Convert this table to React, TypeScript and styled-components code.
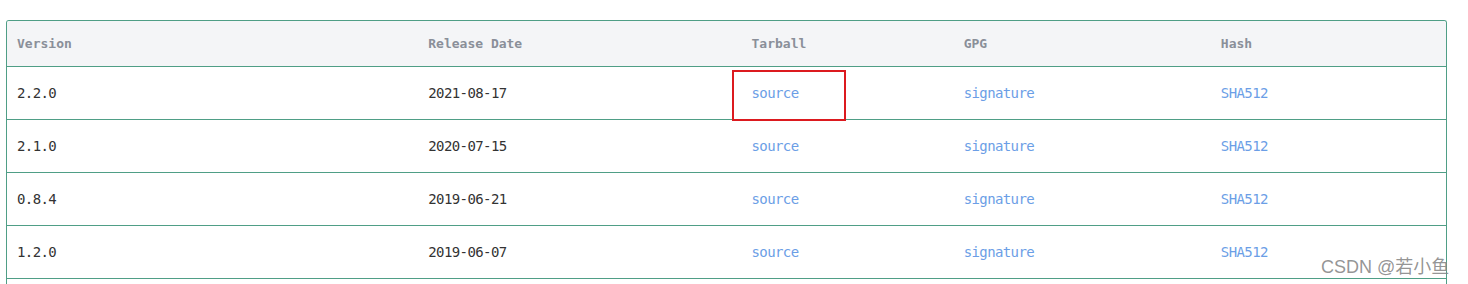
import React from "react";
import styled, { createGlobalStyle } from "styled-components";

const GlobalStyle = createGlobalStyle`
  html, body {
    margin: 0;
    padding: 0;
    background: #fff;
    overflow: hidden;
  }
  body {
    font-family: "DejaVu Sans Mono", "Liberation Mono", monospace;
  }
`;

type Release = {
  version: string;
  date: string;
};

const releases: Release[] = [
  { version: "2.2.0", date: "2021-08-17" },
  { version: "2.1.0", date: "2020-07-15" },
  { version: "0.8.4", date: "2019-06-21" },
  { version: "1.2.0", date: "2019-06-07" },
];

const columns = [
  { title: "Version", width: 411 },
  { title: "Release Date", width: 323 },
  { title: "Tarball", width: 212 },
  { title: "GPG", width: 257 },
  { title: "Hash", width: 235 },
];

const Page = () => {
  return (
    <>
      <GlobalStyle />
      <PageWrapper>
        <TableFrame>
          <Table>
            <colgroup>
              {columns.map((c) => (
                <col key={c.title} style={{ width: c.width }} />
              ))}
            </colgroup>
            <thead>
              <tr>
                {columns.map((c) => (
                  <HeadCell key={c.title}>{c.title}</HeadCell>
                ))}
              </tr>
            </thead>
            <tbody>
              {releases.map((r, i) => (
                <tr key={r.version + r.date}>
                  <Cell>{r.version}</Cell>
                  <Cell>{r.date}</Cell>
                  <Cell>
                    {i === 0 && <Highlight />}
                    <Link href="#">source</Link>
                  </Cell>
                  <Cell>
                    <Link href="#">signature</Link>
                  </Cell>
                  <Cell>
                    <Link href="#">SHA512</Link>
                  </Cell>
                </tr>
              ))}
            </tbody>
          </Table>
        </TableFrame>
        <Watermark>CSDN @若小鱼</Watermark>
      </PageWrapper>
    </>
  );
};

export default Page;

const PageWrapper = styled.div`
  position: relative;
  display: flex;
  flex-direction: column;
  width: 1468px;
  height: 284px;
  padding: 20px 0 0 6px;
  box-sizing: border-box;
`;

const TableFrame = styled.div`
  flex: 1;
  width: 1441px;
  border: 1px solid #4f9e86;
  border-bottom: none;
  border-radius: 3px 3px 0 0;
  overflow: hidden;
  box-sizing: border-box;
`;

const Table = styled.table`
  width: 100%;
  table-layout: fixed;
  border-collapse: collapse;
  font-size: 14px;
  letter-spacing: -0.6px;
`;

const HeadCell = styled.th`
  height: 45px;
  padding: 0 10px;
  text-align: left;
  font-size: 13px;
  letter-spacing: 0;
  font-weight: bold;
  color: #8a8f99;
  background: #f4f5f7;
  border-bottom: 1px solid #4f9e86;
`;

const Cell = styled.td`
  position: relative;
  height: 52px;
  padding: 0 10px;
  color: #333;
  border-bottom: 1px solid #4f9e86;
`;

const Link = styled.a`
  color: #6b9ee6;
  text-decoration: none;
`;

const Highlight = styled.span`
  position: absolute;
  left: -10px;
  top: 3px;
  width: 110px;
  height: 47px;
  border: 2px solid #dc1a1f;
`;

const Watermark = styled.div`
  position: absolute;
  left: 1321px;
  top: 252px;
  font-family: "Liberation Sans", "Noto Sans CJK SC", sans-serif;
  font-size: 18px;
  color: rgba(130, 130, 130, 0.85);
  white-space: nowrap;
`;
